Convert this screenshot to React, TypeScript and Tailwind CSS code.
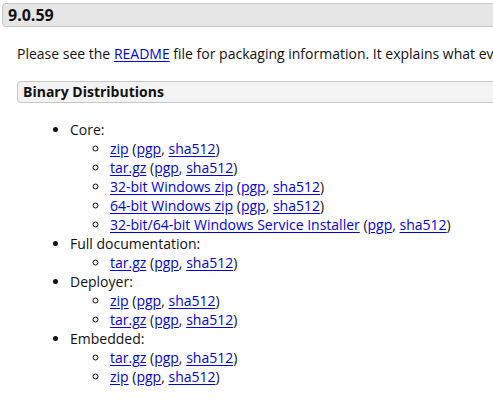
import React from "react";

const A = ({ children }: { children: React.ReactNode }) => (
  <a href="#" className="text-[#0000ee] underline underline-offset-[2px]">{children}</a>
);

const Sig = () => (
  <>
    {" "}(<A>pgp</A>, <A>sha512</A>)
  </>
);

const Sub = ({ label }: { label: string }) => (
  <li className="list-[circle]">
    <A>{label}</A>
    <Sig />
  </li>
);

export default function App() {
  return (
    <div className="w-[493px] h-[400px] overflow-hidden bg-white text-[#111] text-[14px] leading-[19px]" style={{ fontFamily: '"Open Sans", sans-serif' }}>
      <div className="w-[720px] pt-[3px] pl-[2px]">
        <div className="h-[24px] bg-[#e6e6e6] border border-[#c8c8c8] rounded-[4px] pl-[5px] font-bold text-[16px] leading-[22px] text-[#111]">
          9.0.59
        </div>
        <div className="pl-[15px]">
          <p className="mt-[17px] whitespace-nowrap">
            Please see the <A>README</A> file for packaging information. It explains what every distribution contains.
          </p>
          <div className="mt-[18px] h-[22px] bg-[#f3f3f3] border border-[#c8c8c8] rounded-[4px] pl-[5px] font-bold text-[14px] leading-[20px]">
            Binary Distributions
          </div>
          <ul className="mt-[17px] pl-[53px] list-disc">
            <li>
              Core:
              <ul className="pl-[40px]">
                <Sub label="zip" />
                <Sub label="tar.gz" />
                <Sub label="32-bit Windows zip" />
                <Sub label="64-bit Windows zip" />
                <Sub label="32-bit/64-bit Windows Service Installer" />
              </ul>
            </li>
            <li>
              Full documentation:
              <ul className="pl-[40px]">
                <Sub label="tar.gz" />
              </ul>
            </li>
            <li>
              Deployer:
              <ul className="pl-[40px]">
                <Sub label="zip" />
                <Sub label="tar.gz" />
              </ul>
            </li>
            <li>
              Embedded:
              <ul className="pl-[40px]">
                <Sub label="tar.gz" />
                <Sub label="zip" />
              </ul>
            </li>
          </ul>
        </div>
      </div>
    </div>
  );
}
